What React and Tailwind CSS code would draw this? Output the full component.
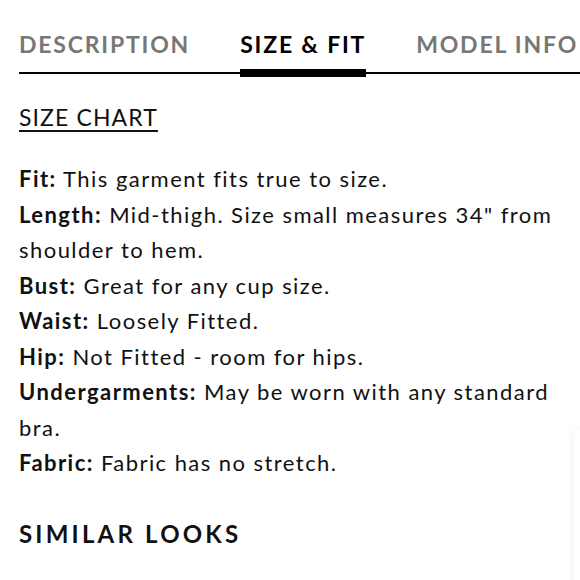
import React from 'react';

const tabs = [
    { label: 'DESCRIPTION', active: false },
    { label: 'SIZE & FIT', active: true },
    { label: 'MODEL INFO', active: false },
];

const details = [
    { label: 'Fit:', text: 'This garment fits true to size.' },
    { label: 'Length:', text: 'Mid-thigh. Size small measures 34" from shoulder to hem.' },
    { label: 'Bust:', text: 'Great for any cup size.' },
    { label: 'Waist:', text: 'Loosely Fitted.' },
    { label: 'Hip:', text: 'Not Fitted - room for hips.' },
    { label: 'Undergarments:', text: 'May be worn with any standard bra.' },
    { label: 'Fabric:', text: 'Fabric has no stretch.' },
];

const App = () => {
    return (
        <div className="relative w-[580px] h-[580px] overflow-hidden bg-white font-['Lato','Liberation_Sans',sans-serif] text-[#111]">
            {/* tabs */}
            <div className="pt-[29px] pl-[19px]">
                <div className="flex gap-[50px] whitespace-nowrap">
                    {tabs.map((tab) => (
                        <div key={tab.label} className="flex flex-col">
                            <span
                                className={`text-[23px] leading-[30px] font-bold tracking-[1.8px] ${tab.active ? 'text-black' : 'text-[#777]'}`}
                            >
                                {tab.label}
                            </span>
                            <div className={`mt-[10px] h-[8px] ${tab.active ? 'bg-black' : 'bg-transparent'}`}></div>
                        </div>
                    ))}
                </div>
                <div className="-mt-[5px] h-[2px] bg-black"></div>
            </div>

            {/* content */}
            <div className="pl-[19px] w-[568px]">
                <a className="mt-[29px] inline-block text-[23px] leading-[28px] tracking-[1.1px] underline underline-offset-[4px] decoration-[1.5px]">
                    SIZE CHART
                </a>

                <div className="mt-[29px] text-[22px] leading-[35.5px] tracking-[1.45px]">
                    {details.map((d) => (
                        <p key={d.label}>
                            <span className="font-bold">{d.label}</span> {d.text}
                        </p>
                    ))}
                </div>

                <h2 className="mt-[38px] text-[24px] leading-[30px] font-bold tracking-[3.2px]">SIMILAR LOOKS</h2>
            </div>

            {/* floating panel edge peeking in from the right */}
            <div className="absolute left-[574px] top-[430px] w-[60px] h-[200px] bg-white shadow-[0_0_8px_rgba(0,0,0,0.07)]"></div>
        </div>
    );
};

export default App;
